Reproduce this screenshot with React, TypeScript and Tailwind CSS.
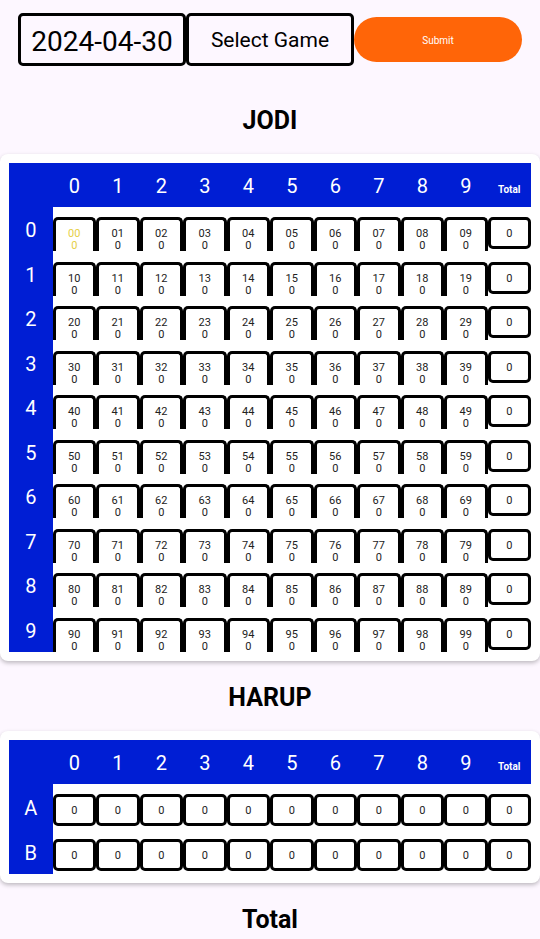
import type { ReactNode } from "react";

const DIGITS = [0, 1, 2, 3, 4, 5, 6, 7, 8, 9];

function SectionTitle({ children }: { children: ReactNode }) {
  return <h2 className="pt-[22px] text-center text-[25px] leading-[30px] font-bold">{children}</h2>;
}

function NumberTable({ name, heightClass, children }: { name: string; heightClass: string; children: ReactNode }) {
  return (
    <section className="mt-[18px] rounded-lg bg-white p-[9px] shadow-[0_2px_4px_rgba(0,0,0,0.25)]">
      <table aria-label={name} className={`w-full table-fixed border-collapse ${heightClass}`}>
        <thead>
          <tr className="bg-[#001ed4] text-white">
            <td className="p-0" />
            {DIGITS.map((d) => (
              <th key={d} scope="col" className="p-0 pt-0.5 align-baseline text-xl leading-[42px] font-normal">
                {d}
              </th>
            ))}
            <th scope="col" className="p-0 align-baseline text-[10px] leading-4 font-bold">
              Total
            </th>
          </tr>
        </thead>
        <tbody>{children}</tbody>
      </table>
    </section>
  );
}

function RowLabel({ children }: { children: ReactNode }) {
  return (
    <th scope="row" className="bg-[#001ed4] p-0 pt-0.5 align-middle text-xl leading-6 font-normal text-white">
      {children}
    </th>
  );
}

function JodiCell({ number, highlighted }: { number: string; highlighted: boolean }) {
  const id = `jodi-${number}`;
  return (
    <td className="p-0 pt-2.5 align-top">
      <div
        className={`flex h-[34px] flex-col overflow-hidden rounded-t-[5px] border-3 border-b-0 border-black pt-2 text-center text-[11px] leading-3 ${
          highlighted ? "text-[#e6cf45]" : "text-[#222222]"
        }`}
      >
        <label htmlFor={id}>{number}</label>
        <input id={id} defaultValue="0" inputMode="numeric" className="h-3 w-full text-center outline-none" />
      </div>
    </td>
  );
}

function BoxCell({ label, readOnly = false }: { label: string; readOnly?: boolean }) {
  return (
    <td className="p-0 pt-2.5 align-top">
      <input
        aria-label={label}
        defaultValue="0"
        readOnly={readOnly}
        inputMode="numeric"
        className="block h-8 w-full rounded-[5px] border-3 border-black pt-px text-center text-[11px] text-[#222222] outline-none"
      />
    </td>
  );
}

export default function App() {
  return (
    <main className="min-h-screen bg-[#fdf7ff] pt-[13px] font-[Roboto,sans-serif] text-black">
      <form className="grid grid-cols-3 items-center px-[18px]" onSubmit={(e) => e.preventDefault()}>
        <input
          aria-label="Date"
          defaultValue="2024-04-30"
          className="h-[53px] w-full rounded-[5px] border-3 border-black pt-[3px] text-center text-[28px] outline-none"
        />
        <select
          aria-label="Game"
          className="h-[53px] w-full appearance-none rounded-[5px] border-3 border-black pt-[3px] text-center text-[21px] outline-none"
        >
          <option>Select Game</option>
        </select>
        <button type="submit" className="h-[45px] w-full rounded-full bg-[#ff6508] pt-0.5 text-[10px] text-white">
          Submit
        </button>
      </form>

      <div className="pt-[18px]">
        <SectionTitle>JODI</SectionTitle>
        <NumberTable name="Jodi" heightClass="h-[489px]">
          {DIGITS.map((row) => (
            <tr key={row}>
              <RowLabel>{row}</RowLabel>
              {DIGITS.map((col) => (
                <JodiCell key={col} number={`${row}${col}`} highlighted={row === 0 && col === 0} />
              ))}
              <BoxCell label={`Total of row ${row}`} readOnly />
            </tr>
          ))}
        </NumberTable>

        <SectionTitle>HARUP</SectionTitle>
        <NumberTable name="Harup" heightClass="h-[134px]">
          {["A", "B"].map((row) => (
            <tr key={row}>
              <RowLabel>{row}</RowLabel>
              {DIGITS.map((col) => (
                <BoxCell key={col} label={`${row}${col}`} />
              ))}
              <BoxCell label={`Total of row ${row}`} readOnly />
            </tr>
          ))}
        </NumberTable>

        <SectionTitle>Total</SectionTitle>
      </div>
    </main>
  );
}
